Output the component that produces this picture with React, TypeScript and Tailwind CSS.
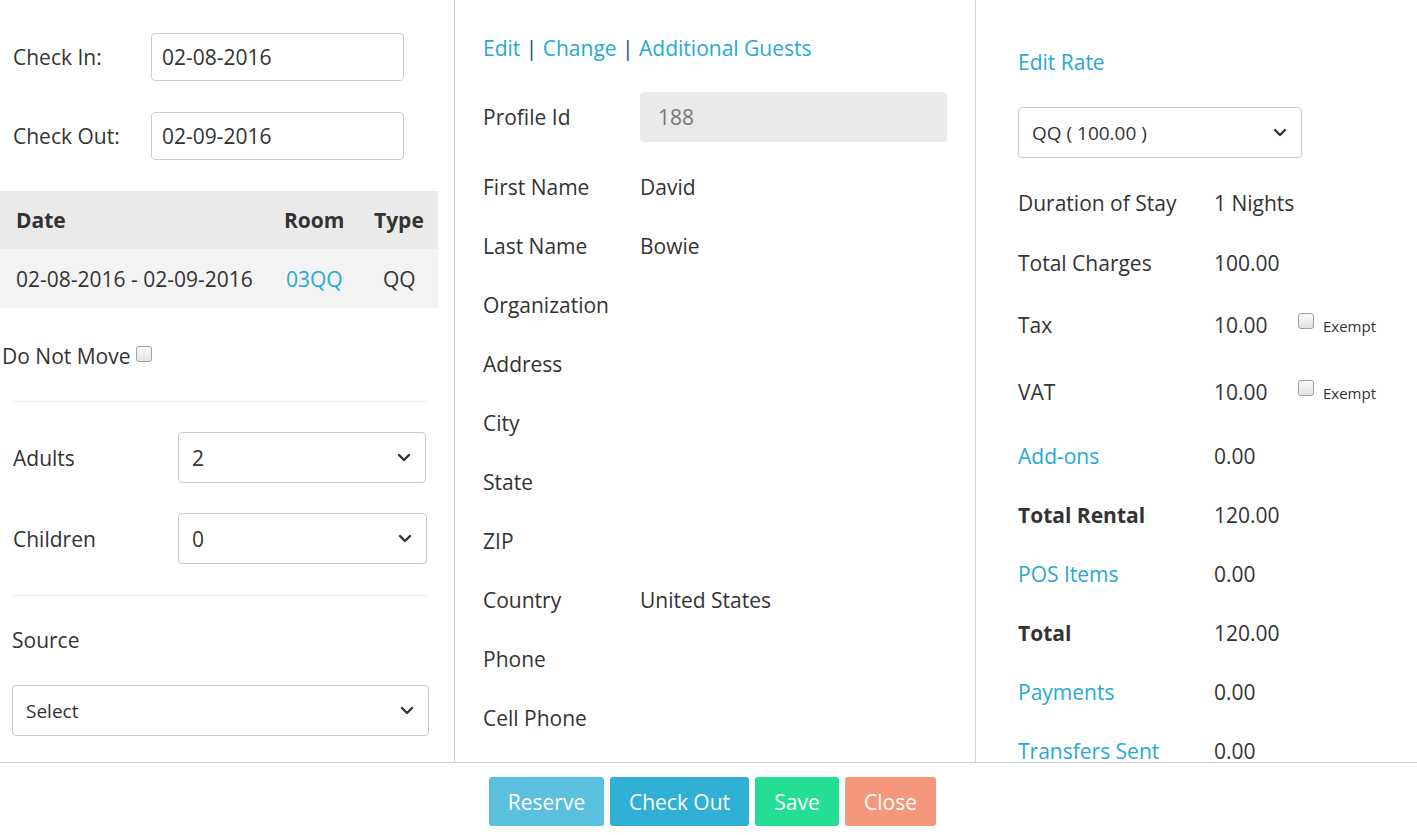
import React from 'react';

const link = 'text-[#27a9d3]';

function Chevron() {
  return (
    <svg width="14" height="9" viewBox="0 0 14 9" className="shrink-0">
      <path d="M2 2 L7 7 L12 2" fill="none" stroke="#333" strokeWidth="2.4" strokeLinecap="round" strokeLinejoin="round" />
    </svg>
  );
}

function Select({ value, className }: { value: string; className: string }) {
  return (
    <div className={`flex items-center justify-between border border-[#cccccc] rounded-[4px] bg-white pl-[13px] pr-[14px] ${className}`}>
      <span>{value}</span>
      <Chevron />
    </div>
  );
}

function Box() {
  return <span className="inline-block w-[16px] h-[16px] rounded-[3px] border border-[#a0a0a0] bg-gradient-to-b from-[#fafafa] to-[#e2e2e2]"></span>;
}

const guestRows: [string, string][] = [
  ['First Name', 'David'],
  ['Last Name', 'Bowie'],
  ['Organization', ''],
  ['Address', ''],
  ['City', ''],
  ['State', ''],
  ['ZIP', ''],
  ['Country', 'United States'],
  ['Phone', ''],
  ['Cell Phone', ''],
];

type Charge = { label: string; value: string; kind: 'plain' | 'link' | 'bold'; h: string; exempt?: boolean };

const charges: Charge[] = [
  { label: 'Duration of Stay', value: '1 Nights', kind: 'plain', h: 'h-[60px]' },
  { label: 'Total Charges', value: '100.00', kind: 'plain', h: 'h-[60px]' },
  { label: 'Tax', value: '10.00', kind: 'plain', h: 'h-[64px]', exempt: true },
  { label: 'VAT', value: '10.00', kind: 'plain', h: 'h-[70px]', exempt: true },
  { label: 'Add-ons', value: '0.00', kind: 'link', h: 'h-[58px]' },
  { label: 'Total Rental', value: '120.00', kind: 'bold', h: 'h-[59px]' },
  { label: 'POS Items', value: '0.00', kind: 'link', h: 'h-[59px]' },
  { label: 'Total', value: '120.00', kind: 'bold', h: 'h-[59px]' },
  { label: 'Payments', value: '0.00', kind: 'link', h: 'h-[59px]' },
  { label: 'Transfers Sent', value: '0.00', kind: 'link', h: 'h-[59px]' },
];

export default function App() {
  return (
    <div className="w-[1417px] h-[835px] bg-white text-[#333333] text-[21px] leading-[28px] font-['Open_Sans',sans-serif] overflow-hidden">
      {/* Panneaux du haut */}
      <div className="flex h-[763px] border-b border-[#cfcfcf] overflow-hidden">
        {/* Colonne gauche : dates, chambre, occupants */}
        <div className="w-[455px] shrink-0 border-r border-[#d4d4d4] pr-[16px] pt-[33px]">
          <div className="flex items-center h-[48px]">
            <span className="w-[151px] pl-[13px]">Check In:</span>
            <div className="w-[253px] h-[48px] border border-[#cccccc] rounded-[4px] flex items-center pl-[10px]">02-08-2016</div>
          </div>
          <div className="flex items-center h-[48px] mt-[31px]">
            <span className="w-[151px] pl-[13px]">Check Out:</span>
            <div className="w-[253px] h-[48px] border border-[#cccccc] rounded-[4px] flex items-center pl-[10px]">02-09-2016</div>
          </div>

          <div className="mt-[31px] w-[438px]">
            <div className="flex items-center h-[58px] bg-[#eaeaea] font-bold">
              <span className="pl-[16px] w-[284px]">Date</span>
              <span className="w-[90px]">Room</span>
              <span>Type</span>
            </div>
            <div className="flex items-center h-[59px] bg-[#f3f3f3]">
              <span className="pl-[16px] w-[286px]">02-08-2016 - 02-09-2016</span>
              <span className={`w-[97px] ${link}`}>03QQ</span>
              <span>QQ</span>
            </div>
          </div>

          <div className="mt-[34px] h-[28px] flex items-start pl-[2px]">
            <span>Do Not Move</span>
            <span className="ml-[5px] mt-[4px] flex"><Box /></span>
          </div>

          <div className="mt-[31px] ml-[13px] w-[414px] border-t border-[#eeeeee]"></div>

          <div className="mt-[30px] flex items-center pl-[13px]">
            <span className="w-[165px]">Adults</span>
            <Select value="2" className="w-[248px] h-[51px]" />
          </div>
          <div className="mt-[30px] flex items-center pl-[13px]">
            <span className="w-[165px]">Children</span>
            <Select value="0" className="w-[249px] h-[51px]" />
          </div>

          <div className="mt-[31px] ml-[13px] w-[414px] border-t border-[#eeeeee]"></div>

          <div className="mt-[30px] pl-[12px]">Source</div>
          <div className="mt-[31px] pl-[12px]">
            <Select value="Select" className="w-[417px] h-[51px] text-[19px]" />
          </div>
        </div>

        {/* Colonne centrale : profil client */}
        <div className="w-[521px] shrink-0 border-r border-[#d4d4d4] pl-[28px] pr-[28px] pt-[34px]">
          <div className="h-[28px] whitespace-nowrap">
            <span className={link}>Edit</span>
            <span className="text-[#1d4f7a]"> | </span>
            <span className={link}>Change</span>
            <span className="text-[#1d4f7a]"> | </span>
            <span className={link}>Additional Guests</span>
          </div>
          <div className="mt-[30px] flex items-center h-[50px]">
            <span className="w-[157px]">Profile Id</span>
            <div className="w-[307px] h-[50px] bg-[#eaeaea] rounded-[4px] flex items-center pl-[18px] text-[#777777]">188</div>
          </div>
          <div className="mt-[15px]">
            {guestRows.map(([label, value]) => (
              <div key={label} className="flex items-center h-[59px]">
                <span className="w-[157px]">{label}</span>
                <span>{value}</span>
              </div>
            ))}
          </div>
        </div>

        {/* Colonne droite : tarifs et totaux */}
        <div className="flex-1 pl-[42px] pt-[48px]">
          <div className={`h-[28px] ${link}`}>Edit Rate</div>
          <div className="mt-[31px]">
            <Select value="QQ ( 100.00 )" className="w-[284px] h-[51px] text-[19px]" />
          </div>
          <div className="mt-[15px]">
            {charges.map((c) => (
              <div key={c.label} className={`flex items-center whitespace-nowrap ${c.h}`}>
                <span className={`w-[196px] ${c.kind === 'link' ? link : ''} ${c.kind === 'bold' ? 'font-bold' : ''}`}>{c.label}</span>
                <span className="w-[84px]">{c.value}</span>
                {c.exempt && (
                  <span className="flex items-start">
                    <span className="flex -mt-[1px]"><Box /></span>
                    <span className="ml-[9px] mt-[2px] text-[15px] leading-[20px]">Exempt</span>
                  </span>
                )}
              </div>
            ))}
          </div>
        </div>
      </div>

      {/* Boutons d'action */}
      <div className="flex justify-center gap-[6px] pt-[14px] pl-[8px]">
        <button className="w-[115px] h-[49px] rounded-[3px] bg-[#5bc0de] text-white">Reserve</button>
        <button className="w-[139px] h-[49px] rounded-[3px] bg-[#31b0d5] text-white">Check Out</button>
        <button className="w-[84px] h-[49px] rounded-[3px] bg-[#24df93] text-white">Save</button>
        <button className="w-[91px] h-[49px] rounded-[3px] bg-[#f4977a] text-white">Close</button>
      </div>
    </div>
  );
}
